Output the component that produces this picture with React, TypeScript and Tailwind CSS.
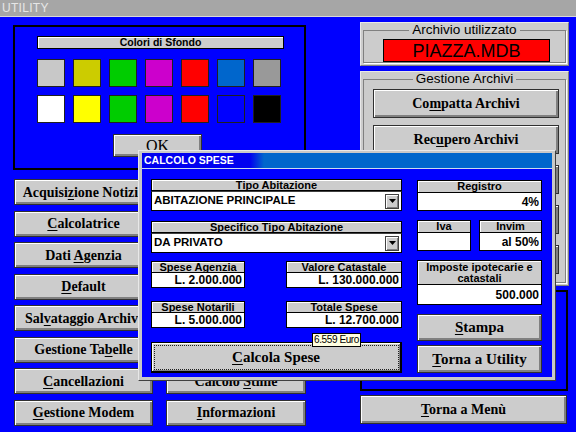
import React from "react";

const sans = "font-['Liberation_Sans',Arial,sans-serif]";
const serif = "font-['Liberation_Serif','Times_New_Roman',serif]";

const btn =
  "bg-[#cccccc] border border-[#303030] shadow-[inset_1px_1px_0_#ffffff,inset_-2px_-2px_0_#808080] flex items-center justify-center font-bold text-[14px] text-black whitespace-nowrap overflow-hidden " +
  serif;

function U({ children }: { children: React.ReactNode }) {
  return <span className="underline underline-offset-2 decoration-1">{children}</span>;
}

function Btn({ children, className = "" }: { children?: React.ReactNode; className?: string }) {
  return (
    <div className={btn + " " + className}>
      <span className="whitespace-pre">{children}</span>
    </div>
  );
}

const swatchRow1 = ["#c8c8c8", "#cccc00", "#00cc00", "#cc00cc", "#ff0000", "#0066cc", "#999999"];
const swatchRow2 = ["#ffffff", "#ffff00", "#00cc00", "#cc00cc", "#ff0000", "#0000ff", "#000000"];

function Label({ children, className = "" }: { children: React.ReactNode; className?: string }) {
  return (
    <div
      className={
        "bg-[#cccccc] border border-black shadow-[inset_1px_1px_0_#ffffff] flex items-center justify-center text-center font-bold text-[11px] leading-[11px] text-black " +
        className
      }
    >
      {children}
    </div>
  );
}

function Value({ children, className = "" }: { children?: React.ReactNode; className?: string }) {
  return (
    <div
      className={
        "bg-white border border-black border-t-0 flex items-center justify-end pr-[2px] font-bold text-[12px] leading-none text-black " +
        className
      }
    >
      {children}
    </div>
  );
}

function Combo({ text }: { text: string }) {
  return (
    <div className="h-[20px] bg-white border border-black border-t-[#404040] flex items-center pl-[2px] pr-[2px]">
      <span className="flex-1 text-[11.5px] font-bold text-black leading-none">{text}</span>
      <div className="w-[14px] h-[15px] bg-[#cccccc] border border-[#404040] shadow-[inset_1px_1px_0_#ffffff,inset_-1px_-1px_0_#808080] flex flex-col items-center justify-center gap-[1px]">
        <svg width="7" height="4" viewBox="0 0 7 4">
          <polygon points="0,0 7,0 3.5,4" fill="#000" />
        </svg>
      </div>
    </div>
  );
}

export default function App() {
  const rowBtns1: React.ReactNode[] = [
    <>Acquisi<U>z</U>ione Notizie</>,
    <><U>C</U>alcolatrice</>,
    <>Dati <U>A</U>genzia</>,
    <><U>D</U>efault</>,
    <>Sal<U>v</U>ataggio Archivi</>,
    <>Gestione Ta<U>b</U>elle</>,
    <><U>C</U>ancellazioni</>,
    <><U>G</U>estione Modem</>,
  ];
  const rowBtns2: React.ReactNode[] = [
    null,
    null,
    null,
    null,
    null,
    null,
    <>Calcolo <U>S</U>time</>,
    <><U>I</U>nformazioni</>,
  ];

  return (
    <div className={"relative w-[576px] h-[432px] overflow-hidden bg-[#0000ff] flex flex-col " + sans}>
      {/* Title bar */}
      <div className="h-[17px] bg-[#a6a6a6] border-b border-[#d8d8d8] flex items-center pl-[2px] shrink-0">
        <span className="text-[12px] leading-none text-[#e6e6e6] tracking-[0.3px]">UTILITY</span>
      </div>

      <div className="flex flex-1">
        {/* Left column */}
        <div className="ml-[13px] w-[293px] flex flex-col">
          <div className="mt-[8px] h-[145px] border-2 border-black flex flex-col">
            <div className="ml-[22px] mt-[9px] w-[247px] h-[13px] bg-[#cccccc] border border-black shadow-[inset_1px_1px_0_#ffffff] flex items-center justify-center font-bold text-[10.5px] leading-none text-black">
              Colori di Sfondo
            </div>
            <div className="ml-[22px] mt-[10px] flex flex-col gap-[8px]">
              {[swatchRow1, swatchRow2].map((row, ri) => (
                <div key={ri} className="flex gap-[8px]">
                  {row.map((c, i) => (
                    <div
                      key={i}
                      className="w-[28px] h-[28px] border border-[#202020]"
                      style={{ backgroundColor: c }}
                    />
                  ))}
                </div>
              ))}
            </div>
            <div className="ml-[98px] mt-[11px] w-[89px] h-[23px]">
              <Btn className="w-full h-full text-[16px] font-normal">OK</Btn>
            </div>
          </div>

          <div className="mt-[9px] grid grid-cols-[139px_140px] gap-x-[13px] gap-y-[5.57px] ml-[1px]">
            {rowBtns1.map((b, i) => (
              <React.Fragment key={i}>
                <Btn className="h-[26px]">{b}</Btn>
                <Btn className="h-[26px]">{rowBtns2[i]}</Btn>
              </React.Fragment>
            ))}
          </div>
        </div>

        {/* Right column */}
        <div className="ml-[54px] w-[209px] flex flex-col">
          <div className="mt-[5px] h-[44px] bg-[#cccccc] border border-[#e8e8e8] border-r-[#808080] border-b-[#808080] px-[2px] pb-[2px]">
            <fieldset className="h-full border border-[#808080] shadow-[1px_1px_0_#ffffff] flex flex-col items-center">
              <legend className="mx-auto px-[3px] text-[13.5px] leading-[14px] text-black">Archivio utilizzato</legend>
              <div className="mt-[2px] ml-[4px] w-[167px] h-[24px] bg-[#ff0000] border border-black flex items-center justify-center text-[18px] leading-none text-black">
                PIAZZA.MDB
              </div>
            </fieldset>
          </div>

          <div className="mt-[5px] h-[215px] bg-[#cccccc] border border-[#e8e8e8] border-r-[#808080] border-b-[#808080] px-[2px] pb-[2px]">
            <fieldset className="h-full border border-[#808080] shadow-[1px_1px_0_#ffffff] flex flex-col">
              <legend className="mx-auto px-[3px] text-[13.5px] leading-[14px] text-black">Gestione Archivi</legend>
              <div className="ml-[9px] w-[186px] flex flex-col">
                <Btn className="mt-[3px] h-[29px]">Co<U>m</U>patta Archivi</Btn>
                <Btn className="mt-[7px] h-[29px]">Rec<U>u</U>pero Archivi</Btn>
                <Btn className="mt-[11px] h-[29px]" />
                <Btn className="mt-[11px] h-[29px]" />
                <Btn className="mt-[11px] h-[29px]" />
              </div>
            </fieldset>
          </div>

          <div className="mt-[4px] h-[101px] w-[208px] border-2 border-black" />

          <Btn className="mt-[4px] h-[29px] w-[207px]"><U>T</U>orna a Menù</Btn>
        </div>
      </div>

      {/* Dialog window */}
      <div className="absolute left-[138px] top-[150px] w-[418px] h-[231px] bg-[#c8c8c8] border border-[#e8e8e8] border-r-[#404040] border-b-[#404040] px-[3px] pt-[2px] pb-[3px] flex flex-col">
        <div className="h-[15px] bg-[linear-gradient(90deg,#0000f0_0px,#0000f0_108px,#0066cc_122px,#0066cc_100%)] flex items-center pl-[2px] shrink-0">
          <span className="text-[10.5px] font-bold leading-none text-white">CALCOLO SPESE</span>
        </div>
        <div className="h-[1px] bg-[#c8d8f0] shrink-0" />
        <div className="flex-1 bg-[#0000ff] pl-[9px] pt-[10px] flex gap-[15px]">
          {/* left fields */}
          <div className="w-[251px] flex flex-col">
            <Label className="h-[12px]">Tipo Abitazione</Label>
            <Combo text="ABITAZIONE PRINCIPALE" />
            <Label className="mt-[10px] h-[12px]">Specifico Tipo Abitazione</Label>
            <Combo text="DA PRIVATO" />
            <div className="mt-[8px] flex justify-between">
              <div className="w-[94px] flex flex-col">
                <Label className="h-[12px]">Spese Agenzia</Label>
                <Value className="h-[15px]">L. 2.000.000</Value>
              </div>
              <div className="w-[116px] flex flex-col">
                <Label className="h-[12px]">Valore Catastale</Label>
                <Value className="h-[15px]">L. 130.000.000</Value>
              </div>
            </div>
            <div className="mt-[13px] flex justify-between">
              <div className="w-[94px] flex flex-col">
                <Label className="h-[12px]">Spese Notarili</Label>
                <Value className="h-[15px]">L. 5.000.000</Value>
              </div>
              <div className="w-[116px] flex flex-col">
                <Label className="h-[12px]">Totale Spese</Label>
                <Value className="h-[15px]">L. 12.700.000</Value>
              </div>
            </div>
            <div
              className={
                "mt-[14px] h-[31px] bg-[#cccccc] border border-black border-r-2 border-b-2 shadow-[inset_1px_1px_0_#ffffff,inset_-1px_-1px_0_#808080] outline-1 outline-dotted outline-[#202020] -outline-offset-4 flex items-center justify-center font-bold text-[15px] text-black " +
                serif
              }
            >
              <span className="whitespace-pre"><U>C</U>alcola Spese</span>
            </div>
          </div>
          {/* right fields */}
          <div className="w-[125px] flex flex-col">
            <Label className="mt-[1px] h-[13px]">Registro</Label>
            <Value className="h-[18px]">4%</Value>
            <div className="mt-[9px] flex justify-between">
              <div className="w-[54px] flex flex-col">
                <Label className="h-[13px]">Iva</Label>
                <Value className="h-[18px]" />
              </div>
              <div className="w-[63px] flex flex-col">
                <Label className="h-[13px]">Invim</Label>
                <Value className="h-[18px]">al 50%</Value>
              </div>
            </div>
            <Label className="mt-[9px] h-[25px] px-[4px]">Imposte ipotecarie e catastali</Label>
            <Value className="h-[20px]">500.000</Value>
            <Btn className="mt-[9px] h-[27px] text-[15px]"><U>S</U>tampa</Btn>
            <Btn className="mt-[4px] h-[28px] text-[15px]"><U>T</U>orna a Utility</Btn>
          </div>
        </div>
      </div>

      {/* Tooltip */}
      <div className="absolute left-[312px] top-[333px] w-[49px] h-[14px] bg-[#ffffe1] border border-black flex items-center justify-center text-[10px] tracking-[-0.4px] leading-none text-black whitespace-nowrap">
        6.559 Euro
      </div>
    </div>
  );
}
